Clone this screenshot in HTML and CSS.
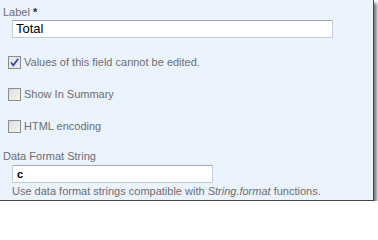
FILE: index.html
```html
<!DOCTYPE html>
<html>
<head>
<meta charset="utf-8">
<link rel="stylesheet" href="styles.css">
</head>
<body>
<div class="panel">
  <div class="field-label">Label <span class="req">*</span></div>
  <div class="input wide">Total</div>
  <div class="check-row first">
    <span class="box checked">
      <svg width="11" height="11" viewBox="0 0 11 11"><path d="M2 5.5 L4.3 8.2 L9.2 1.8" fill="none" stroke="#3a4f8f" stroke-width="1.8"/></svg>
    </span>
    <span class="check-text">Values of this field cannot be edited.</span>
  </div>
  <div class="check-row">
    <span class="box"></span>
    <span class="check-text">Show In Summary</span>
  </div>
  <div class="check-row">
    <span class="box"></span>
    <span class="check-text">HTML encoding</span>
  </div>
  <div class="field-label second">Data Format String</div>
  <div class="input narrow code">c</div>
  <div class="hint">Use data format strings compatible with <i>String.format</i> functions.</div>
</div>
</body>
</html>
```
FILE: styles.css
```css
html, body {
  margin: 0;
  padding: 0;
  background: #ffffff;
}
.panel {
  box-sizing: border-box;
  width: 374px;
  height: 201px;
  background: #ebf3ff;
  border-right: 1px solid #444;
  border-bottom: 1px solid #444;
  box-shadow: 3px 3px 3px 0 rgba(0,0,0,0.5);
  font-family: "Liberation Sans", Arial, sans-serif;
  font-size: 11px;
  color: #6e6e6e;
  padding: 6px 0 0 3px;
  display: flex;
  flex-direction: column;
}
.field-label {
  line-height: 13px;
}
.req {
  color: #1a2a4a;
  font-weight: bold;
}
.input {
  box-sizing: border-box;
  height: 18px;
  margin-left: 9px;
  background: #ffffff;
  border: 1px solid #c5cbd5;
  border-top-color: #a4a9b3;
  color: #000;
  padding-left: 3px;
  line-height: 16px;
}
.wide {
  width: 321px;
  margin-top: 1px;
  font-size: 13px;
}
.narrow {
  width: 201px;
  margin-top: 2px;
}
.code {
  font-weight: bold;
  font-size: 11px;
  padding-left: 4px;
}
.check-row {
  display: flex;
  align-items: center;
  margin-top: 18px;
  height: 14px;
  padding-left: 5px;
}
.check-row.first {
  margin-top: 17px;
}
.box {
  box-sizing: border-box;
  width: 13px;
  height: 13px;
  border: 1px solid #8d8d8d;
  background: linear-gradient(135deg, #dcdcdc 0%, #f4f4f4 100%);
  display: flex;
  align-items: center;
  justify-content: center;
  margin-right: 3px;
}
.box.checked {
  background: #e6e6ee;
}
.check-text {
  line-height: 14px;
}
.field-label.second {
  margin-top: 17px;
}
.hint {
  margin-left: 9px;
  margin-top: 2px;
  line-height: 13px;
}
```
